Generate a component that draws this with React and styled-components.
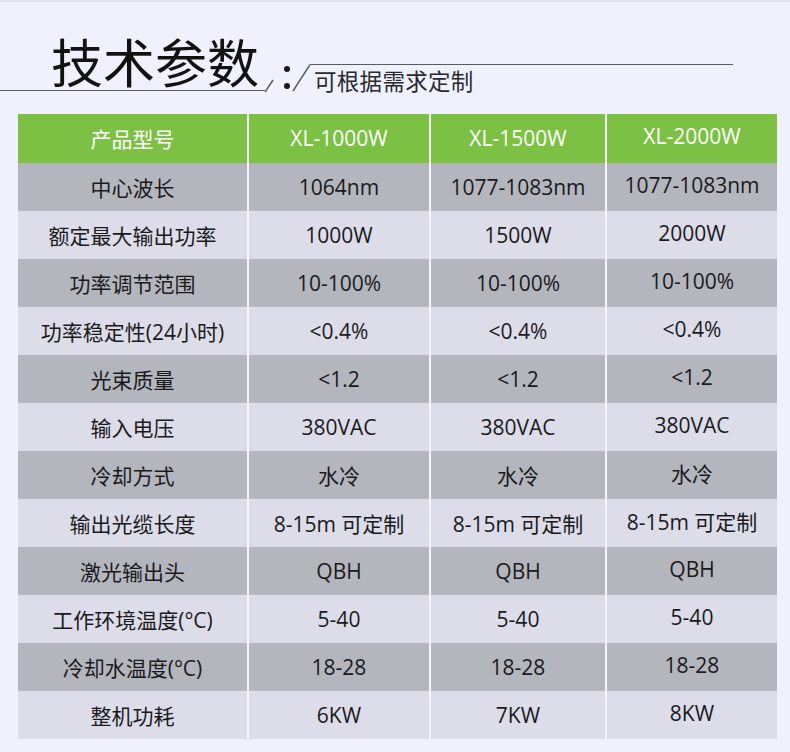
import React from "react";
import styled, { createGlobalStyle } from "styled-components";

const GlobalStyle = createGlobalStyle`
  html, body { margin: 0; padding: 0; background: #eff1fd; }
  body { font-family: "Open Sans", "Noto Sans CJK SC", sans-serif; }
`;

const Page = styled.div`
  width: 790px;
  height: 752px;
  box-sizing: border-box;
  background: #eff1fd;
  border-top: 2px solid #dfe5f2;
  overflow: hidden;
`;

const Heading = styled.div`
  display: flex;
  align-items: flex-start;
  height: 112px;
`;

const TitleBlock = styled.div`
  width: 265px;
  height: 89px;
  box-sizing: border-box;
  padding: 33px 0 0 51px;
  border-bottom: 1.5px solid #5a5a60;
`;

const Title = styled.h1`
  margin: 0;
  font-family: "Noto Sans CJK SC", sans-serif;
  font-size: 52px;
  line-height: 52px;
  font-weight: 400;
  color: #121212;
  white-space: nowrap;
`;

const Ornament = styled.svg`
  display: block;
  flex: none;
  margin-top: 61px;
`;

const SubBlock = styled.div`
  width: 419px;
  margin-top: 62px;
  border-top: 1.5px solid #5a5a60;
  padding: 3px 0 0 4px;
`;

const Subtitle = styled.div`
  font-family: "Noto Sans CJK SC", sans-serif;
  font-size: 22.5px;
  line-height: 24px;
  color: #2a2a2e;
  letter-spacing: 0.3px;
`;

const Table = styled.div`
  margin-left: 18px;
  width: 759px;
  display: grid;
  grid-template-columns: 229px 180px 174px 170px;
  column-gap: 2px;
  background: #f4f5fb;
`;

const bg = { head: "#7cc143", dark: "#b4b6bd", light: "#dcdde9" };

const Cell = styled.div`
  height: ${(p) => (p.$tone === "head" ? 49 : 48)}px;
  background: ${(p) => bg[p.$tone]};
  color: ${(p) => (p.$tone === "head" ? "#ffffff" : "#1a1a1c")};
  display: flex;
  align-items: center;
  justify-content: center;
  box-sizing: border-box;
  padding-bottom: ${(p) => (p.$last ? 5 : 1)}px;
  font-family: "Open Sans", "Noto Sans CJK SC", sans-serif;
  font-size: 21px;
  white-space: nowrap;
`;

const header = ["产品型号", "XL-1000W", "XL-1500W", "XL-2000W"];
const rows = [
  ["中心波长", "1064nm", "1077-1083nm", "1077-1083nm"],
  ["额定最大输出功率", "1000W", "1500W", "2000W"],
  ["功率调节范围", "10-100%", "10-100%", "10-100%"],
  ["功率稳定性(24小时)", "<0.4%", "<0.4%", "<0.4%"],
  ["光束质量", "<1.2", "<1.2", "<1.2"],
  ["输入电压", "380VAC", "380VAC", "380VAC"],
  ["冷却方式", "水冷", "水冷", "水冷"],
  ["输出光缆长度", "8-15m 可定制", "8-15m 可定制", "8-15m 可定制"],
  ["激光输出头", "QBH", "QBH", "QBH"],
  ["工作环境温度(°C)", "5-40", "5-40", "5-40"],
  ["冷却水温度(°C)", "18-28", "18-28", "18-28"],
  ["整机功耗", "6KW", "7KW", "8KW"],
];

export default function App() {
  return (
    <>
      <GlobalStyle />
      <Page>
        <Heading>
          <TitleBlock>
            <Title>技术参数</Title>
          </TitleBlock>
          <Ornament width="45" height="30" viewBox="0 0 45 30">
            <line x1="0" y1="29.2" x2="8" y2="17" stroke="#5a5a60" strokeWidth="1.5" />
            <circle cx="22" cy="6" r="3" fill="#1a1a1a" />
            <circle cx="22" cy="23" r="3" fill="#1a1a1a" />
            <line x1="28" y1="28" x2="45" y2="1.6" stroke="#5a5a60" strokeWidth="1.5" />
          </Ornament>
          <SubBlock>
            <Subtitle>可根据需求定制</Subtitle>
          </SubBlock>
        </Heading>
        <Table>
          {header.map((t, i) => (
            <Cell key={"h" + i} $tone="head" $last={i === 3}>
              {t}
            </Cell>
          ))}
          {rows.map((r, ri) =>
            r.map((t, ci) => (
              <Cell key={ri + "-" + ci} $tone={ri % 2 === 0 ? "dark" : "light"} $last={ci === 3}>
                {t}
              </Cell>
            ))
          )}
        </Table>
      </Page>
    </>
  );
}
